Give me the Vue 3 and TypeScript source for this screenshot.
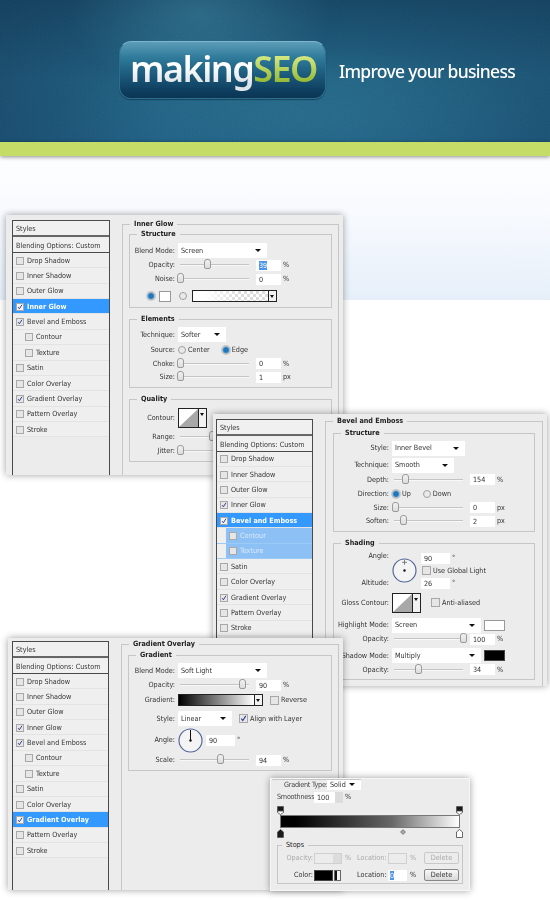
<script setup lang="ts">
interface Item {
  t: 'sel' | 'slider' | 'input' | 'unit' | 'radio' | 'check' | 'swatch' | 'grad' | 'trans' | 'contour' | 'dial'
  text?: string
  w?: number
  v?: number
  on?: boolean
  cls?: string
}
interface Row {
  cls: string
  label?: string
  items?: Item[]
  angle?: boolean
}
interface Group {
  title: string
  h: number
  rows: Row[]
}
interface Win {
  cls: string
  title: string
  active: string
  sub?: boolean
  groups: Group[]
}

const styles = [
  { n: 'Drop Shadow', c: false },
  { n: 'Inner Shadow', c: false },
  { n: 'Outer Glow', c: false },
  { n: 'Inner Glow', c: true },
  { n: 'Bevel and Emboss', c: true },
  { n: 'Contour', c: false, nest: true },
  { n: 'Texture', c: false, nest: true },
  { n: 'Satin', c: false },
  { n: 'Color Overlay', c: false },
  { n: 'Gradient Overlay', c: true },
  { n: 'Pattern Overlay', c: false },
  { n: 'Stroke', c: false }
]

const sliderRow = (cls: string, label: string, v: number, val: string, unit: string, sel = false): Row => ({
  cls,
  label,
  items: [
    { t: 'slider', v },
    { t: 'input', text: val, on: sel },
    { t: 'unit', text: unit }
  ]
})

const windows: Win[] = [
  {
    cls: 'w1',
    title: 'Inner Glow',
    active: 'Inner Glow',
    groups: [
      {
        title: 'Structure',
        h: 74,
        rows: [
          { cls: 'h15 mt3', label: 'Blend Mode:', items: [{ t: 'sel', text: 'Screen', w: 89 }] },
          sliderRow('h14', 'Opacity:', 39, '39', '%', true),
          sliderRow('h14', 'Noise:', 0, '0', '%'),
          {
            cls: 'h16 mt2 nolab',
            items: [
              { t: 'radio', on: true },
              { t: 'swatch', w: 12, cls: 'white m4' },
              { t: 'radio', on: false, cls: 'm8' },
              { t: 'trans', w: 85, cls: 'm5' }
            ]
          }
        ]
      },
      {
        title: 'Elements',
        h: 69,
        rows: [
          { cls: 'h15 mt2', label: 'Technique:', items: [{ t: 'sel', text: 'Softer', w: 48 }] },
          {
            cls: 'h14 mt1',
            label: 'Source:',
            items: [
              { t: 'radio', on: false, text: 'Center' },
              { t: 'radio', on: true, text: 'Edge', cls: 'm12' }
            ]
          },
          sliderRow('h13', 'Choke:', 0, '0', '%'),
          sliderRow('h14', 'Size:', 0, '1', 'px')
        ]
      },
      {
        title: 'Quality',
        h: 63,
        rows: [
          { cls: 'h20 mt3', label: 'Contour:', items: [{ t: 'contour' }] },
          { cls: 'h14 mt2', label: 'Range:', items: [{ t: 'slider', v: 46 }] },
          { cls: 'h14', label: 'Jitter:', items: [{ t: 'slider', v: 0 }] }
        ]
      }
    ]
  },
  {
    cls: 'w2',
    title: 'Bevel and Emboss',
    active: 'Bevel and Emboss',
    sub: true,
    groups: [
      {
        title: 'Structure',
        h: 99,
        rows: [
          { cls: 'h15 mt2', label: 'Style:', items: [{ t: 'sel', text: 'Inner Bevel', w: 73 }] },
          { cls: 'h15 mt2', label: 'Technique:', items: [{ t: 'sel', text: 'Smooth', w: 62 }] },
          sliderRow('h14', 'Depth:', 16, '154', '%'),
          {
            cls: 'h14',
            label: 'Direction:',
            items: [
              { t: 'radio', on: true, text: 'Up' },
              { t: 'radio', on: false, text: 'Down', cls: 'm12' }
            ]
          },
          sliderRow('h14', 'Size:', 1, '0', 'px'),
          sliderRow('h13', 'Soften:', 13, '2', 'px')
        ]
      },
      {
        title: 'Shading',
        h: 137,
        rows: [
          { cls: 'anglerow', angle: true },
          {
            cls: 'h20 mt3',
            label: 'Gloss Contour:',
            items: [{ t: 'contour' }, { t: 'check', text: 'Anti-aliased', cls: 'm10' }]
          },
          {
            cls: 'h15 mt5',
            label: 'Highlight Mode:',
            items: [
              { t: 'sel', text: 'Screen', w: 89 },
              { t: 'swatch', w: 21, cls: 'white m3' }
            ]
          },
          sliderRow('h13', 'Opacity:', 100, '100', '%'),
          {
            cls: 'h14 mt3',
            label: 'Shadow Mode:',
            items: [
              { t: 'sel', text: 'Multiply', w: 89 },
              { t: 'swatch', w: 21, cls: 'black m3' }
            ]
          },
          sliderRow('h14', 'Opacity:', 35, '34', '%')
        ]
      }
    ]
  },
  {
    cls: 'w3',
    title: 'Gradient Overlay',
    active: 'Gradient Overlay',
    groups: [
      {
        title: 'Gradient',
        h: 116,
        rows: [
          { cls: 'h15 mt2', label: 'Blend Mode:', items: [{ t: 'sel', text: 'Soft Light', w: 89 }] },
          sliderRow('h14', 'Opacity:', 90, '90', '%'),
          {
            cls: 'h14 mt1',
            label: 'Gradient:',
            items: [{ t: 'grad', w: 85 }, { t: 'check', text: 'Reverse', cls: 'm7' }]
          },
          {
            cls: 'h15 mt4',
            label: 'Style:',
            items: [
              { t: 'sel', text: 'Linear', w: 54 },
              { t: 'check', on: true, text: 'Align with Layer', cls: 'm7' }
            ]
          },
          {
            cls: 'h26 mt1',
            label: 'Angle:',
            items: [
              { t: 'dial', cls: 'needle' },
              { t: 'input', text: '90', w: 29, cls: 'm3' },
              { t: 'unit', text: '°' }
            ]
          },
          sliderRow('h14', 'Scale:', 58, '94', '%')
        ]
      }
    ]
  }
]
</script>

<template>
  <div class="page">
    <header class="head">
      <svg class="grain" aria-hidden="true">
        <filter id="grainf"><feTurbulence type="fractalNoise" baseFrequency="0.9" numOctaves="2" /><feColorMatrix type="saturate" values="0" /></filter>
        <rect width="100%" height="100%" filter="url(#grainf)" />
      </svg>
      <div class="logo"><span class="mk">making</span><span class="seo">SEO</span></div>
      <div class="tag">Improve your business</div>
    </header>
    <div class="lime"></div>
    <div class="glow"></div>

    <section v-for="w in windows" :key="w.cls" class="win" :class="w.cls">
      <aside class="side">
        <div class="box first">Styles</div>
        <div class="box">Blending Options: Custom</div>
        <div
          v-for="s in styles"
          :key="s.n"
          class="st"
          :class="{ nest: s.nest, act: s.n === w.active, sub: w.sub && s.nest }"
        >
          <span class="cb" :class="{ ck: s.c }">
            <svg v-if="s.c" viewBox="0 0 8 8"><path d="M1.5 4.2 3.2 6.4 6.6 1" /></svg>
          </span>
          <span>{{ s.n }}</span>
        </div>
      </aside>

      <div class="fs outer">
        <div class="lg">{{ w.title }}</div>
        <div v-for="g in w.groups" :key="g.title" class="fs group" :style="{ height: g.h + 'px' }">
          <div class="lg">{{ g.title }}</div>
          <div v-for="(r, ri) in g.rows" :key="ri" class="row" :class="r.cls">
            <template v-if="r.angle">
              <div class="anglabs"><span>Angle:</span><span>Altitude:</span></div>
              <svg class="dial" viewBox="0 0 25 25">
                <circle cx="12.5" cy="12.5" r="11.5" />
                <circle class="dot" cx="12.5" cy="12.5" r="1.2" />
                <path class="cross" d="M12.5 1.8v5M10 4.3h5" />
              </svg>
              <div class="anglecol">
                <div class="angline"><span class="input w29">90</span><span class="unit">°</span></div>
                <div class="angline"><span class="cb big"></span><span class="chk">Use Global Light</span></div>
                <div class="angline"><span class="input w29">26</span><span class="unit">°</span></div>
              </div>
            </template>
            <template v-else>
              <span v-if="r.label" class="lab">{{ r.label }}</span>
              <template v-for="(c, ci) in r.items" :key="ci">
                <span v-if="c.t === 'sel'" class="sel" :style="{ width: c.w + 'px' }">{{ c.text }}</span>
                <span v-else-if="c.t === 'slider'" class="slider">
                  <i :style="{ left: c.v + '%' }"></i>
                </span>
                <span v-else-if="c.t === 'input'" class="input" :class="[c.cls, c.w ? 'w29' : '']">
                  <b v-if="c.on">{{ c.text }}</b><template v-else>{{ c.text }}</template>
                </span>
                <span v-else-if="c.t === 'unit'" class="unit">{{ c.text }}</span>
                <span v-else-if="c.t === 'radio'" class="radiow" :class="c.cls">
                  <span class="radio" :class="{ on: c.on }"></span><span v-if="c.text" class="chk">{{ c.text }}</span>
                </span>
                <span v-else-if="c.t === 'check'" class="radiow" :class="c.cls">
                  <span class="cb big" :class="{ ck: c.on }">
                    <svg v-if="c.on" viewBox="0 0 8 8"><path d="M1.5 4.2 3.2 6.4 6.6 1" /></svg>
                  </span>
                  <span class="chk">{{ c.text }}</span>
                </span>
                <span v-else-if="c.t === 'swatch'" class="swatch" :class="c.cls" :style="{ width: c.w + 'px' }"></span>
                <span v-else-if="c.t === 'grad'" class="gradbox" :style="{ width: c.w + 'px' }"><span class="fill bw"></span><span class="drop"></span></span>
                <span v-else-if="c.t === 'trans'" class="gradbox" :class="c.cls" :style="{ width: c.w + 'px' }"><span class="fill tr"></span><span class="drop"></span></span>
                <span v-else-if="c.t === 'contour'" class="contour">
                  <svg viewBox="0 0 21 18" preserveAspectRatio="none"><polygon points="0,18 21,0 21,18" /></svg><span class="drop"></span>
                </span>
                <svg v-else-if="c.t === 'dial'" class="dial" viewBox="0 0 25 25">
                  <circle cx="12.5" cy="12.5" r="11.5" />
                  <path class="needle" d="M12.5 2v10.5" />
                  <circle class="dot" cx="12.5" cy="12.5" r="1.2" />
                </svg>
              </template>
            </template>
          </div>
        </div>
      </div>
    </section>

    <section class="win w4">
      <div class="ge-top">
        <span class="ge-lab">Gradient Type:</span>
        <span class="sel small">Solid</span>
      </div>
      <div class="ge-smooth">
        <span class="ge-lab">Smoothness:</span>
        <span class="input spin">100<span class="spinner"></span></span>
        <span class="unit">%</span>
      </div>
      <div class="ge-bar">
        <svg class="stop tl" viewBox="0 0 7 9"><path class="d" d="M.5.5h6v4.5H.5z" /><path class="l" d="M.5 5h6v1.5L3.5 8.5.5 6.5z" /></svg>
        <svg class="stop tr2" viewBox="0 0 7 9"><path class="d" d="M.5.5h6v4.5H.5z" /><path class="l" d="M.5 5h6v1.5L3.5 8.5.5 6.5z" /></svg>
        <span class="barfill"></span>
        <svg class="stop bl" viewBox="0 0 7 9"><path class="d" d="M3.5.5l3 2.5v5.5h-6V3z" /></svg>
        <svg class="stop br" viewBox="0 0 7 9"><path class="l" d="M3.5.5l3 2.5v5.5h-6V3z" /></svg>
        <span class="mid"></span>
      </div>
      <div class="fs stops">
        <div class="lg">Stops</div>
        <div class="ge-row dis">
          <span class="g-lab">Opacity:</span>
          <span class="input g-op spin off"><span class="spinner"></span></span>
          <span class="unit g-u">%</span>
          <span class="g-lab2">Location:</span>
          <span class="input g-loc off"></span>
          <span class="unit g-u">%</span>
          <span class="btn off">Delete</span>
        </div>
        <div class="ge-row">
          <span class="g-lab">Color:</span>
          <span class="swatch black g-col"></span>
          <span class="g-arrow"></span>
          <span class="g-lab2 next">Location:</span>
          <span class="input g-loc"><b>0</b></span>
          <span class="unit g-u">%</span>
          <span class="btn">Delete</span>
        </div>
      </div>
    </section>
  </div>
</template>

<style scoped>
.page {
  position: relative;
  width: 550px;
  height: 900px;
  overflow: hidden;
  background: #fff;
  font-family: "Noto Sans", "DejaVu Sans", sans-serif;
}
.head {
  position: relative;
  height: 142px;
  display: flex;
  align-items: flex-start;
  overflow: hidden;
  background:
    radial-gradient(130px 80px at 200px 15px, rgba(60, 130, 155, 0.5), transparent),
    radial-gradient(240px 70px at 300px 115px, rgba(50, 120, 145, 0.4), transparent),
    linear-gradient(90deg, rgba(20, 55, 85, 0.45), transparent 30%, transparent 65%, rgba(20, 55, 85, 0.3)),
    linear-gradient(180deg, #174663 0%, #215f7f 55%, #205d80 100%);
}
.grain {
  position: absolute;
  inset: 0;
  width: 100%;
  height: 100%;
  opacity: 0.16;
  mix-blend-mode: overlay;
}
.logo {
  position: relative;
  margin: 41px 0 0 119px;
  width: 207px;
  height: 58px;
  box-sizing: border-box;
  border: 1px solid #2d6f8e;
  border-top-color: #7fb5c9;
  border-radius: 12px;
  padding-left: 10px;
  font-size: 36px;
  line-height: 53px;
  font-weight: 600;
  letter-spacing: -1.55px;
  white-space: nowrap;
  background: linear-gradient(180deg, #5c9db8 0%, #2f7a9a 28%, #1c5b7d 58%, #0e3d5e 88%, #0c3554 100%);
  box-shadow: 0 1px 1px rgba(6, 30, 50, 0.5);
}
.mk {
  background: linear-gradient(180deg, #fff 45%, #dfe4e8 80%);
  -webkit-background-clip: text;
  background-clip: text;
  color: transparent;
}
.seo {
  background: linear-gradient(180deg, #d4e880 25%, #8cb32c 85%);
  -webkit-background-clip: text;
  background-clip: text;
  color: transparent;
}
.tag {
  position: relative;
  margin: 58px 0 0 13px;
  font-size: 17.5px;
  font-weight: 500;
  line-height: 27px;
  letter-spacing: -0.7px;
  color: #fff;
  white-space: nowrap;
}
.lime {
  height: 14px;
  background: #c5dc66;
  box-shadow: 0 1px 4px rgba(0, 0, 0, 0.45);
  position: relative;
}
.glow {
  height: 144px;
  background: linear-gradient(180deg, #fdfeff 0%, #f6f9fe 45%, #e6eff9 100%);
}

.win {
  position: absolute;
  display: flex;
  align-items: flex-start;
  background: #ececec;
  box-shadow: 0 0 7px rgba(0, 0, 0, 0.38);
  overflow: hidden;
  color: #333;
  font-family: "DejaVu Sans Condensed", "DejaVu Sans", sans-serif;
  font-stretch: condensed;
  font-size: 7.2px;
  line-height: 12px;
}
.side, .outer, .ge-top, .ge-smooth, .ge-bar, .stops { filter: blur(0.3px); }
.w1 { left: 6px; top: 215px; width: 337px; height: 260px; padding: 5px 0 0 6px; box-sizing: border-box; z-index: 1; }
.w2 { left: 213px; top: 414px; width: 334px; height: 272px; padding: 4.6px 0 0 3px; box-sizing: border-box; z-index: 2; }
.w3 { left: 8px; top: 638px; width: 335px; height: 252px; padding: 3px 0 0 4px; box-sizing: border-box; z-index: 3; }
.w4 { left: 270px; top: 778px; width: 200px; height: 113px; box-sizing: border-box; z-index: 4; flex-direction: column; border: 1px solid #f6f6f6; }

.side {
  width: 98px;
  height: 400px;
  flex: none;
  box-sizing: border-box;
  border-left: 1px solid #4a4a4a;
  border-right: 1px solid #4a4a4a;
  border-top: 1px solid #4a4a4a;
}
.w2 .side, .w3 .side { width: 97px; }
.box {
  height: 14px;
  padding-left: 3px;
  line-height: 15px;
  border-bottom: 1px solid #4a4a4a;
  white-space: nowrap;
  background: #f0f0f0;
}
.box.first { margin-bottom: 1px; border-bottom: 2px solid #666; }
.st {
  height: 15.36px;
  box-sizing: border-box;
  display: flex;
  align-items: center;
  gap: 3px;
  padding: 1px 0 0 3px;
  border-bottom: 1px solid #e3e3e3;
  background: #efefef;
  white-space: nowrap;
}
.st.nest { padding-left: 12px; }
.st.act { background: #3399ff; color: #fff; font-weight: 700; }
.st.sub { background: linear-gradient(90deg, #efefef 9px, #8dc1f5 9px); color: #dbeafb; border-bottom-color: #9ccaf7; }
.cb {
  width: 8px;
  height: 8px;
  flex: none;
  box-sizing: border-box;
  border: 1px solid #a8a8a8;
  background: #e6e6e6;
  display: inline-block;
}
.cb.big { width: 9px; height: 9px; }
.st.act .cb { background: #f4f4f4; }
.cb svg { display: block; width: 100%; height: 100%; fill: none; stroke: #33408f; stroke-width: 1.3; }

.fs {
  box-sizing: border-box;
  border: 1px solid #c6c6c6;
}
.lg {
  width: fit-content;
  height: 12px;
  margin: -7px 0 0 7px;
  padding: 0 4px;
  background: #ececec;
  font-weight: 700;
  color: #222;
  white-space: nowrap;
}
.outer {
  flex: none;
  margin-left: 12px;
  border-bottom: 0;
  height: 400px;
  padding: 0 6px;
}
.outer > .lg { margin-left: 1px; }
.w2 .outer > .lg { margin-left: 0; }
.w1 .outer { margin-top: 4px; width: 217px; }
.w2 .outer { margin-top: 2.4px; width: 218px; padding: 0 7px; }
.w3 .outer { margin-top: 3px; width: 218px; }
.group { margin-top: 11px; background: #ececec; }
.outer > .lg + .group { margin-top: 4px; }
.w2 .outer > .lg + .group { margin-top: 6px; }
.w3 .outer > .lg + .group { margin-top: 5px; }
.row { display: flex; align-items: center; white-space: nowrap; }
.nolab { padding-left: 17px; }
.h13 { height: 13px; }
.h14 { height: 14px; }
.h15 { height: 15px; }
.h16 { height: 16px; }
.h20 { height: 20px; }
.h26 { height: 26px; }
.mt1 { margin-top: 1px; }
.mt2 { margin-top: 2px; }
.mt3 { margin-top: 3px; }
.mt4 { margin-top: 4px; }
.mt5 { margin-top: 5px; }
.m3 { margin-left: 3px; }
.m4 { margin-left: 4px; }
.m5 { margin-left: 5px; }
.m7 { margin-left: 7px; }
.m8 { margin-left: 8px; }
.m10 { margin-left: 10px; }
.m12 { margin-left: 12px; }
.lab { width: 45px; margin-right: 3px; text-align: right; flex: none; }
.w2 .lab { width: 55px; }
.w3 .lab { width: 46px; }
.sel {
  display: inline-flex;
  justify-content: space-between;
  align-items: center;
  height: 15px;
  padding-left: 3px;
  box-sizing: border-box;
  background: #fff;
  color: #333;
  flex: none;
}
.sel::after {
  content: "";
  margin-right: 6px;
  border: 3px solid transparent;
  border-top: 3px solid #111;
  border-bottom: 0;
}
.slider {
  position: relative;
  width: 69px;
  height: 2px;
  margin: 0 7px 0 2px;
  flex: none;
  background: #c4c4c4;
  border-bottom: 1px solid #f8f8f8;
  box-sizing: border-box;
}
.slider i {
  position: absolute;
  top: -5px;
  width: 7px;
  height: 10px;
  margin-left: -3px;
  box-sizing: border-box;
  border: 1px solid #9a9a9a;
  border-radius: 3px 3px 2px 2px;
  background: linear-gradient(180deg, #f2f2f2, #dcdcdc);
}
.input {
  width: 25px;
  height: 11px;
  line-height: 12px;
  padding-left: 3px;
  box-sizing: border-box;
  background: #fff;
  flex: none;
  display: inline-block;
}
.input.w29 { width: 29px; }
.input b { font-weight: 400; background: #4b94e6; color: #fff; }
.unit { margin-left: 2px; }
.radiow { display: inline-flex; align-items: center; flex: none; }
.radio {
  width: 8px;
  height: 8px;
  box-sizing: border-box;
  border-radius: 50%;
  border: 1px solid #a0a0a0;
  background: #e9e9e9;
  flex: none;
}
.radio.on { background: #1c78c0; border: 1px solid #b4c2cc; box-shadow: 0 0 0 1px #c8c8c8; }
.chk { margin-left: 2px; }
.swatch { height: 11px; box-sizing: border-box; flex: none; display: inline-block; border: 1px solid #999; }
.swatch.white { background: #fff; }
.swatch.black { background: #000; border-color: #444; }
.gradbox {
  height: 12px;
  box-sizing: border-box;
  border: 1px solid #222;
  display: inline-flex;
  flex: none;
}
.gradbox .fill { flex: 1; }
.fill.bw { background: linear-gradient(90deg, #000, #fff); }
.fill.tr {
  background:
    linear-gradient(90deg, #fff 15%, rgba(255, 255, 255, 0) 60%),
    repeating-conic-gradient(#dcdcdc 0 25%, #fff 0 50%) 0 0 / 6px 6px;
}
.drop {
  position: relative;
  width: 7px;
  flex: none;
  background: #f2f2f2;
  border-left: 1px solid #222;
}
.drop::after {
  content: "";
  position: absolute;
  left: 1px;
  top: 4px;
  border: 2.5px solid transparent;
  border-top: 3px solid #111;
  border-bottom: 0;
}
.contour {
  width: 29px;
  height: 20px;
  box-sizing: border-box;
  border: 1px solid #222;
  display: inline-flex;
  background: #fff;
  flex: none;
}
.contour svg { flex: 1; width: 19px; height: 18px; }
.contour polygon { fill: #a8a8a8; }
.dial { width: 25px; height: 25px; flex: none; fill: none; }
.dial circle { fill: #f4f4f4; stroke: #54689a; stroke-width: 1.2; }
.dial .dot { fill: #111; stroke: none; }
.dial .needle { stroke: #111; stroke-width: 1; }
.dial .cross { stroke: #666; stroke-width: 0.8; }
.anglerow { height: 40px; margin-top: 1px; align-items: flex-start; }
.anglabs { width: 55px; margin-right: 3px; height: 39px; display: flex; flex-direction: column; justify-content: space-between; align-items: flex-end; flex: none; }
.anglerow .dial { margin-top: 8px; }
.anglecol { margin-left: 4px; padding-top: 2px; }
.angline { height: 12.5px; display: flex; align-items: center; }
.angline .cb { margin-left: 1px; }

.ge-top { height: 9px; display: flex; align-items: center; border-top: 1px solid #c6c6c6; margin: 0 1px; }
.ge-lab { color: #444; white-space: nowrap; letter-spacing: -0.25px; }
.ge-top .ge-lab { margin-left: 12px; width: 40px; margin-right: 3px; }
.sel.small { width: 34px; height: 10px; }
.ge-smooth { height: 12px; margin-top: 2px; display: flex; align-items: center; padding-left: 6px; }
.ge-smooth .ge-lab { width: 36px; margin-right: 1px; }
.input.spin { position: relative; width: 29px; }
.spinner { position: absolute; right: 0; top: 0; bottom: 0; width: 8px; background: #dcdcdc; }
.ge-bar { position: relative; margin: 3px 0 0 6px; width: 186px; height: 33px; }
.barfill {
  position: absolute;
  left: 3px;
  top: 9px;
  width: 180px;
  height: 13px;
  box-sizing: border-box;
  border: 1px solid #777;
  background: linear-gradient(90deg, #000 0%, #000 8%, #666 62%, #fff 100%);
}
.stop { position: absolute; width: 7px; height: 9px; }
.stop .d { fill: #1a1a1a; stroke: #444; stroke-width: 0.6; }
.stop .l { fill: #fff; stroke: #444; stroke-width: 0.8; }
.stop.tl { left: 0; top: 0; }
.stop.tr2 { right: 0; top: 0; }
.stop.bl { left: 0; top: 23px; }
.stop.br { right: 0; top: 23px; }
.mid { position: absolute; left: 124px; top: 24px; width: 4px; height: 4px; transform: rotate(45deg); background: #b4b4b4; border: 1px solid #888; box-sizing: border-box; }
.stops { margin: 6px 0 0 6px; width: 186px; height: 39px; flex: none; }
.stops .lg { font-weight: 400; margin-left: 4px; }
.ge-row { position: relative; height: 12px; margin-top: 1px; display: flex; align-items: center; }
.ge-row + .ge-row { margin-top: 5px; }
.dis { color: #aaa; }
.g-lab { width: 35px; text-align: right; margin-right: 1px; flex: none; }
.input.off { background: transparent; border: 1px solid #d0d0d0; }
.input.g-op { width: 28px; }
.g-u { width: 8px; margin-left: 3px; flex: none; }
.g-lab2 { width: 28px; margin-left: 4px; text-align: right; margin-right: 3px; flex: none; }
.g-lab2.next { margin-left: 16px; }
.g-loc { width: 19px; }
.g-loc b { margin-left: -1px; }
.g-col { width: 19px; height: 11px; }
.g-arrow {
  width: 7px;
  height: 11px;
  margin-left: 1px;
  box-sizing: border-box;
  border: 1px solid #666;
  flex: none;
  background: linear-gradient(90deg, #111 45%, #f4f4f4 45%);
}
.btn {
  margin-left: 6px;
  width: 33px;
  height: 10px;
  line-height: 10px;
  text-align: center;
  border: 1px solid #888;
  border-radius: 2px;
  background: linear-gradient(180deg, #f8f8f8, #d8d8d8);
  box-sizing: content-box;
  flex: none;
}
.btn.off { border-color: #c8c8c8; background: #ececec; color: #aaa; }
</style>
